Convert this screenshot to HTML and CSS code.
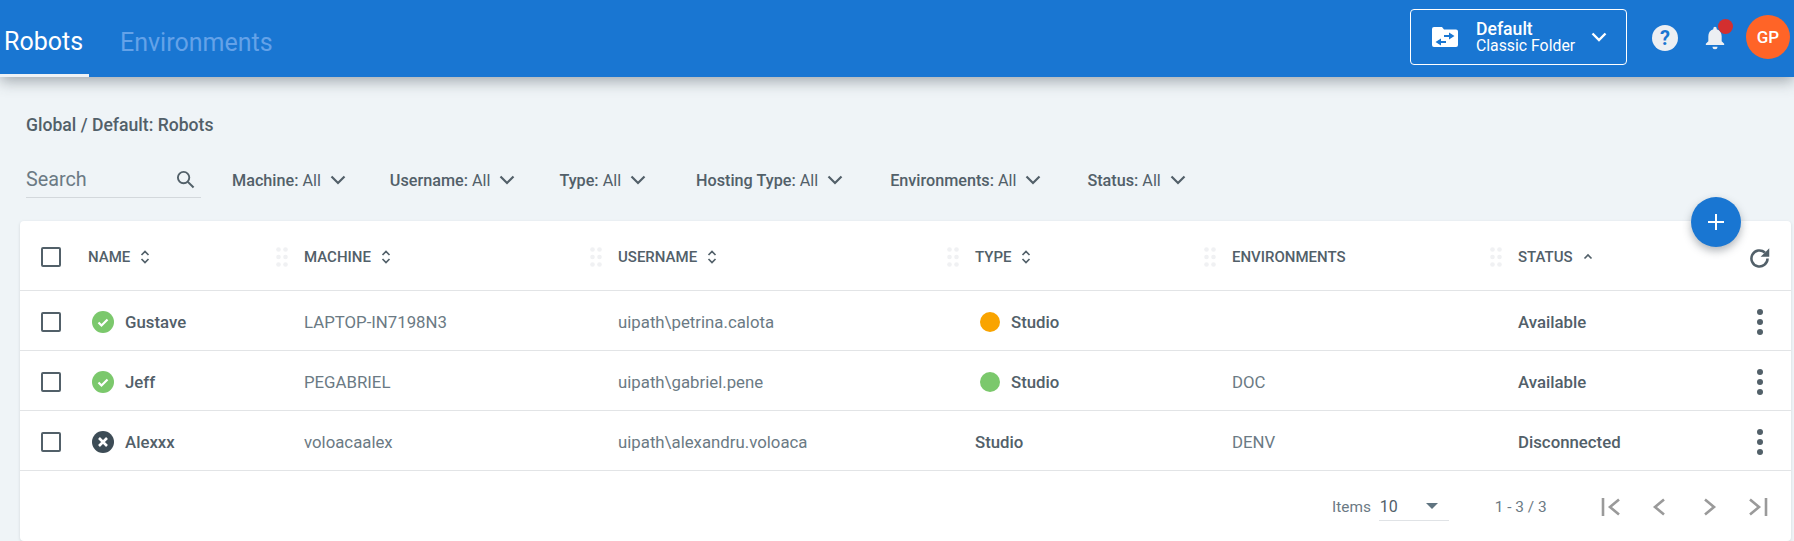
FILE: index.html
```html
<!DOCTYPE html>
<html lang="en">
<head>
<meta charset="utf-8">
<title>Robots</title>
<link rel="stylesheet" href="styles.css">
</head>
<body>
<header class="topbar">
  <nav class="tabs">
    <a class="tab tab-active">Robots</a>
    <a class="tab tab-idle">Environments</a>
  </nav>
  <div class="top-actions">
    <div class="folder">
      <svg class="folder-icon" viewBox="0 0 26 20"><path fill="#fff" d="M2 0h8l2 2.500h12a2 2 0 0 1 2 2V18a2 2 0 0 1-2 2H2a2 2 0 0 1-2-2V2a2 2 0 0 1 2-2z"/><path fill="#1976d2" d="M17 5.500l5.500 3.500-5.500 3.500V10h-5V8h5zM9 11.500V14h5v2H9v2.500L3.500 15z"/></svg>
      <div class="folder-text">
        <span class="folder-name">Default</span>
        <span class="folder-kind">Classic Folder</span>
      </div>
      <svg class="folder-chev" viewBox="0 0 16 10"><path d="M1.500 1.500L8 8l6.500-6.500" fill="none" stroke="#fff" stroke-width="2.400"/></svg>
    </div>
    <svg class="help" viewBox="0 0 26 26"><circle cx="13" cy="13" r="13" fill="#eceff3"/><text x="13" y="19.500" class="help-mark" text-anchor="middle">?</text></svg>
    <div class="bell-wrap">
      <svg class="bell" viewBox="0 0 24 28"><path fill="#eceff3" d="M12 1a2 2 0 0 1 2 2v1c4 1 6 4.500 6 8.500v6l3 3v1.500H1V21.500l3-3v-6C4 8.500 6 5 10 4V3a2 2 0 0 1 2-2zM9 25h6a3 3 0 0 1-6 0z"/></svg>
      <span class="bell-dot"></span>
    </div>
    <div class="avatar">GP</div>
  </div>
</header>

<main class="content">
  <div class="crumb">Global / Default: Robots</div>
  <div class="filters">
    <div class="search">
      <span class="search-label">Search</span>
      <svg class="search-icon" viewBox="0 0 20 20"><circle cx="8" cy="8" r="6" fill="none" stroke="#526069" stroke-width="2"/><path d="M12.500 12.500L18.500 18.500" stroke="#526069" stroke-width="2.200"/></svg>
    </div>
    <div class="filter"><span><b>Machine:</b> All</span><svg class="chev" viewBox="0 0 16 10"><path d="M1.500 1.500L8 8l6.500-6.500" fill="none" stroke="#526069" stroke-width="2.200"/></svg></div>
    <div class="filter"><span><b>Username:</b> All</span><svg class="chev" viewBox="0 0 16 10"><path d="M1.500 1.500L8 8l6.500-6.500" fill="none" stroke="#526069" stroke-width="2.200"/></svg></div>
    <div class="filter filter-type"><span><b>Type:</b> All</span><svg class="chev" viewBox="0 0 16 10"><path d="M1.500 1.500L8 8l6.500-6.500" fill="none" stroke="#526069" stroke-width="2.200"/></svg></div>
    <div class="filter filter-hosting"><span><b>Hosting Type:</b> All</span><svg class="chev" viewBox="0 0 16 10"><path d="M1.500 1.500L8 8l6.500-6.500" fill="none" stroke="#526069" stroke-width="2.200"/></svg></div>
    <div class="filter filter-env"><span><b>Environments:</b> All</span><svg class="chev" viewBox="0 0 16 10"><path d="M1.500 1.500L8 8l6.500-6.500" fill="none" stroke="#526069" stroke-width="2.200"/></svg></div>
    <div class="filter"><span><b>Status:</b> All</span><svg class="chev" viewBox="0 0 16 10"><path d="M1.500 1.500L8 8l6.500-6.500" fill="none" stroke="#526069" stroke-width="2.200"/></svg></div>
  </div>

  <section class="card">
    <button class="fab"><svg viewBox="0 0 18 18"><path d="M9 1v16M1 9h16" stroke="#fff" stroke-width="2"/></svg></button>

    <div class="row row-head">
      <div class="cell"><span class="box"></span></div>
      <div class="cell th"><span>NAME</span><svg class="sort" viewBox="0 0 10 14"><path d="M1.500 5L5 1.500 8.500 5M1.500 9L5 12.500 8.500 9" fill="none" stroke="#526069" stroke-width="1.700"/></svg><svg class="grip" viewBox="0 0 12 20"><g fill="#f0f1f3"><circle cx="2.500" cy="2.500" r="2.300"/><circle cx="9.500" cy="2.500" r="2.300"/><circle cx="2.500" cy="10" r="2.300"/><circle cx="9.500" cy="10" r="2.300"/><circle cx="2.500" cy="17.500" r="2.300"/><circle cx="9.500" cy="17.500" r="2.300"/></g></svg></div>
      <div class="cell th"><span>MACHINE</span><svg class="sort" viewBox="0 0 10 14"><path d="M1.500 5L5 1.500 8.500 5M1.500 9L5 12.500 8.500 9" fill="none" stroke="#526069" stroke-width="1.700"/></svg><svg class="grip" viewBox="0 0 12 20"><g fill="#f0f1f3"><circle cx="2.500" cy="2.500" r="2.300"/><circle cx="9.500" cy="2.500" r="2.300"/><circle cx="2.500" cy="10" r="2.300"/><circle cx="9.500" cy="10" r="2.300"/><circle cx="2.500" cy="17.500" r="2.300"/><circle cx="9.500" cy="17.500" r="2.300"/></g></svg></div>
      <div class="cell th"><span>USERNAME</span><svg class="sort" viewBox="0 0 10 14"><path d="M1.500 5L5 1.500 8.500 5M1.500 9L5 12.500 8.500 9" fill="none" stroke="#526069" stroke-width="1.700"/></svg><svg class="grip" viewBox="0 0 12 20"><g fill="#f0f1f3"><circle cx="2.500" cy="2.500" r="2.300"/><circle cx="9.500" cy="2.500" r="2.300"/><circle cx="2.500" cy="10" r="2.300"/><circle cx="9.500" cy="10" r="2.300"/><circle cx="2.500" cy="17.500" r="2.300"/><circle cx="9.500" cy="17.500" r="2.300"/></g></svg></div>
      <div class="cell th"><span>TYPE</span><svg class="sort" viewBox="0 0 10 14"><path d="M1.500 5L5 1.500 8.500 5M1.500 9L5 12.500 8.500 9" fill="none" stroke="#526069" stroke-width="1.700"/></svg><svg class="grip" viewBox="0 0 12 20"><g fill="#f0f1f3"><circle cx="2.500" cy="2.500" r="2.300"/><circle cx="9.500" cy="2.500" r="2.300"/><circle cx="2.500" cy="10" r="2.300"/><circle cx="9.500" cy="10" r="2.300"/><circle cx="2.500" cy="17.500" r="2.300"/><circle cx="9.500" cy="17.500" r="2.300"/></g></svg></div>
      <div class="cell th"><span>ENVIRONMENTS</span><svg class="grip" viewBox="0 0 12 20"><g fill="#f0f1f3"><circle cx="2.500" cy="2.500" r="2.300"/><circle cx="9.500" cy="2.500" r="2.300"/><circle cx="2.500" cy="10" r="2.300"/><circle cx="9.500" cy="10" r="2.300"/><circle cx="2.500" cy="17.500" r="2.300"/><circle cx="9.500" cy="17.500" r="2.300"/></g></svg></div>
      <div class="cell th th-status"><span>STATUS</span><svg class="sort-up" viewBox="0 0 10 7"><path d="M1.500 5.500L5 2l3.500 3.500" fill="none" stroke="#526069" stroke-width="1.700"/></svg></div>
      <div class="cell cell-end"><svg class="refresh" viewBox="0 0 20 20"><path d="M17 10a7 7 0 1 1-2.300-5.200" fill="none" stroke="#526069" stroke-width="2.200"/><path d="M18.500 1v7.500H11z" fill="#526069"/></svg></div>
    </div>

    <div class="row">
      <div class="cell"><span class="box"></span></div>
      <div class="cell name"><svg class="state" viewBox="0 0 22 22"><circle cx="11" cy="11" r="11" fill="#7bc86c"/><path d="M6.500 11.500l3 3 6-6" fill="none" stroke="#fff" stroke-width="2.200"/></svg>Gustave</div>
      <div class="cell muted">LAPTOP-IN7198N3</div>
      <div class="cell muted">uipath\petrina.calota</div>
      <div class="cell strong cell-type"><span class="dot dot-orange"></span>Studio</div>
      <div class="cell muted"></div>
      <div class="cell strong">Available</div>
      <div class="cell cell-end"><span class="more"><i></i><i></i><i></i></span></div>
    </div>

    <div class="row">
      <div class="cell"><span class="box"></span></div>
      <div class="cell name"><svg class="state" viewBox="0 0 22 22"><circle cx="11" cy="11" r="11" fill="#7bc86c"/><path d="M6.500 11.500l3 3 6-6" fill="none" stroke="#fff" stroke-width="2.200"/></svg>Jeff</div>
      <div class="cell muted">PEGABRIEL</div>
      <div class="cell muted">uipath\gabriel.pene</div>
      <div class="cell strong cell-type"><span class="dot dot-green"></span>Studio</div>
      <div class="cell muted">DOC</div>
      <div class="cell strong">Available</div>
      <div class="cell cell-end"><span class="more"><i></i><i></i><i></i></span></div>
    </div>

    <div class="row">
      <div class="cell"><span class="box"></span></div>
      <div class="cell name"><svg class="state" viewBox="0 0 22 22"><circle cx="11" cy="11" r="11" fill="#3d4c56"/><path d="M7 7l8 8M15 7l-8 8" fill="none" stroke="#fff" stroke-width="2.600"/></svg>Alexxx</div>
      <div class="cell muted">voloacaalex</div>
      <div class="cell muted">uipath\alexandru.voloaca</div>
      <div class="cell strong">Studio</div>
      <div class="cell muted">DENV</div>
      <div class="cell strong">Disconnected</div>
      <div class="cell cell-end"><span class="more"><i></i><i></i><i></i></span></div>
    </div>

    <footer class="pager">
      <span class="pager-label">Items</span>
      <div class="pager-select"><span>10</span><svg class="caret" viewBox="0 0 12 6"><path d="M0 0h12L6 6z" fill="#607480"/></svg></div>
      <span class="pager-range">1 - 3 / 3</span>
      <div class="pager-nav">
        <svg class="nav" viewBox="0 0 20 18"><path d="M2 0v18" stroke="#9a9a9a" stroke-width="2.600"/><path d="M18 1.500L9 9l9 7.500" fill="none" stroke="#9a9a9a" stroke-width="2.600"/></svg>
        <svg class="nav" viewBox="0 0 20 18"><path d="M14 1.500L5 9l9 7.500" fill="none" stroke="#9a9a9a" stroke-width="2.600"/></svg>
        <svg class="nav" viewBox="0 0 20 18"><path d="M6 1.500L15 9l-9 7.500" fill="none" stroke="#9a9a9a" stroke-width="2.600"/></svg>
        <svg class="nav" viewBox="0 0 20 18"><path d="M2 1.500L11 9l-9 7.500" fill="none" stroke="#9a9a9a" stroke-width="2.600"/><path d="M18 0v18" stroke="#9a9a9a" stroke-width="2.600"/></svg>
      </div>
    </footer>
  </section>
</main>
</body>
</html>
```

FILE: styles.css
```css
* { box-sizing: border-box; }

html, body {
  margin: 0;
  height: 541px;
  overflow: hidden;
}

body {
  background: #eff4f7;
  font-family: Roboto, "Liberation Sans", sans-serif;
  color: #526069;
}

.topbar {
  position: relative;
  z-index: 2;
  display: flex;
  justify-content: space-between;
  height: 77px;
  background: #1976d2;
  box-shadow: 0 4px 14px rgba(60, 70, 80, 0.45);
}

.tabs { display: flex; }

.tab {
  display: flex;
  align-items: center;
  height: 77px;
  font-size: 25px;
  padding-top: 8px;
}

.tab-active {
  width: 89px;
  padding-left: 4px;
  color: #fff;
  border-bottom: 3px solid #eef2f5;
}

.tab-idle {
  margin-left: 31px;
  color: #64a2e8;
}

.top-actions {
  display: flex;
  align-items: flex-start;
  padding-right: 4px;
}

.folder {
  display: flex;
  align-items: center;
  width: 217px;
  height: 56px;
  margin-top: 9px;
  padding-left: 21px;
  border: 1px solid #fff;
  border-radius: 4px;
  color: #fff;
}

.folder-icon { width: 26px; height: 20px; }

.folder-text {
  display: flex;
  flex-direction: column;
  width: 115px;
  margin-left: 18px;
}

.folder-name { font-size: 17.600px; font-weight: 500; line-height: 17px; padding-top: 1px; }
.folder-kind { font-size: 15.800px; line-height: 16px; }

.folder-chev { width: 16px; height: 10px; }

.help { width: 26px; height: 26px; margin: 25px 0 0 25px; }
.help-mark { font: 700 20px Roboto, sans-serif; fill: #1976d2; }

.bell-wrap { position: relative; width: 20px; height: 25px; margin: 25px 0 0 27px; }
.bell { display: block; width: 20px; height: 25px; }

.bell-dot {
  position: absolute;
  top: -6px;
  left: 13px;
  width: 15px;
  height: 15px;
  border-radius: 50%;
  background: #d32f2f;
}

.avatar {
  display: flex;
  align-items: center;
  justify-content: center;
  width: 44px;
  height: 44px;
  margin: 15px 0 0 21px;
  border-radius: 50%;
  background: #ff6427;
  color: #fff;
  font-size: 17px;
  font-weight: 500;
}

.crumb {
  padding: 39px 0 0 26px;
  height: 76px;
  font-size: 17.600px;
  font-weight: 500;
  line-height: 19px;
}

.filters {
  display: flex;
  align-items: center;
  height: 54px;
  padding-left: 26px;
  font-size: 16.200px;
}

.search {
  display: flex;
  align-items: center;
  justify-content: space-between;
  width: 175px;
  height: 36px;
  margin: 0 31px 0 0;
  padding-right: 6px;
  border-bottom: 1px solid #d3d8dc;
}

.search-label { font-size: 19.800px; color: #6b7a84; }
.search-icon { width: 19px; height: 19px; }

.filter { display: flex; align-items: center; white-space: nowrap; color: #526069; margin-right: 44px; }
.filter b { font-weight: 500; }
.chev { width: 16px; height: 10px; margin-left: 9px; }
.filter-type { margin-right: 50px; }
.filter-hosting { margin-right: 47px; }
.filter-env { margin-right: 46px; }

.card {
  position: relative;
  width: 1771px;
  height: 320px;
  margin: 14px 0 0 20px;
  background: #fff;
  border-radius: 4px;
  box-shadow: 0 1px 3px rgba(90, 100, 110, 0.2);
}

.fab {
  position: absolute;
  top: -24px;
  right: 50px;
  display: flex;
  align-items: center;
  justify-content: center;
  width: 50px;
  height: 50px;
  padding: 0;
  border: 0;
  border-radius: 50%;
  background: #1976d2;
  box-shadow: 0 4px 8px rgba(60, 70, 80, 0.4);
}

.fab svg { width: 18px; height: 18px; }

.row {
  display: grid;
  grid-template-columns: 68px 216px 314px 357px 257px 286px 218px 55px;
  align-items: center;
  height: 60px;
  border-bottom: 1px solid #e2e4e6;
  font-size: 16.800px;
}

.row-head { height: 70px; }

.cell { display: flex; align-items: center; min-width: 0; padding-top: 2px; }
.cell-end { padding-left: 15px; }

.box {
  width: 20px;
  height: 20px;
  margin-left: 21px;
  border: 2px solid #526069;
  border-radius: 2px;
}

.th { font-size: 15px; font-weight: 500; padding-right: 16px; }
.sort { width: 10px; height: 14px; margin-left: 10px; }
.sort-up { width: 10px; height: 7px; margin-left: 10px; }
.grip { width: 12px; height: 20px; margin-left: auto; }

.row-head .cell-end { padding: 6px 0 0 12px; }
.refresh { width: 23px; height: 23px; }

.name { font-weight: 500; padding-left: 4px; }
.state { width: 22px; height: 22px; margin-right: 11px; }

.muted { color: #6b7a84; }
.strong { font-weight: 500; }
.cell-type { padding-left: 5px; }

.dot { width: 20px; height: 20px; margin-right: 11px; border-radius: 50%; }
.dot-orange { background: #f9a400; }
.dot-green { background: #7bc86c; }

.more { display: flex; flex-direction: column; gap: 4px; padding-left: 6px; }
.more i { width: 6px; height: 6px; border-radius: 50%; background: #526069; }

.pager {
  display: flex;
  align-items: center;
  height: 70px;
  padding-top: 1px;
  padding-left: 1312px;
  font-size: 15.400px;
  color: #6b7a84;
}

.pager-select {
  display: flex;
  align-items: center;
  justify-content: space-between;
  width: 70px;
  height: 28px;
  margin-left: 8px;
  padding: 0 11px 0 1px;
  border-bottom: 1px solid #e0e3e6;
  font-size: 16px;
  color: #526069;
}

.caret { width: 12px; height: 6px; }
.pager-range { margin-left: 46px; }

.pager-nav {
  display: flex;
  gap: 29px;
  margin-left: 54px;
}

.nav { width: 20px; height: 18px; }
```
